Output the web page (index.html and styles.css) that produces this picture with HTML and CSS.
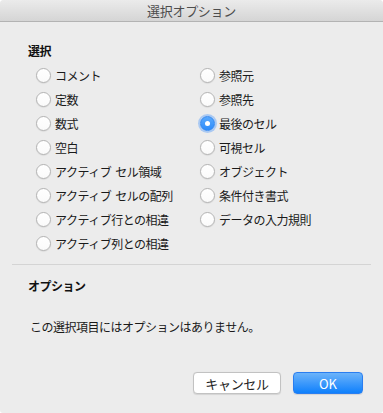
FILE: index.html
```html
<!DOCTYPE html>
<html lang="ja">
  <head>
    <meta charset="UTF-8" />
    <title>選択オプション</title>
    <link rel="stylesheet" href="styles.css">
  </head>
  <body>
    <div class="window">
      <div class="titlebar">選択オプション</div>

      <div class="content content-select">
        <div class="section-title">選択</div>

        <div class="choices">
          <label class="choice"><input type="radio" name="sel" /> コメント</label>
          <label class="choice"><input type="radio" name="sel" /> 参照元</label>
          <label class="choice"><input type="radio" name="sel" /> 定数</label>
          <label class="choice"><input type="radio" name="sel" /> 参照先</label>
          <label class="choice"><input type="radio" name="sel" /> 数式</label>
          <label class="choice"><input type="radio" name="sel" checked /> 最後のセル</label>
          <label class="choice"><input type="radio" name="sel" /> 空白</label>
          <label class="choice"><input type="radio" name="sel" /> 可視セル</label>
          <label class="choice"><input type="radio" name="sel" /> アクティブ セル領域</label>
          <label class="choice"><input type="radio" name="sel" /> オブジェクト</label>
          <label class="choice"><input type="radio" name="sel" /> アクティブ セルの配列</label>
          <label class="choice"><input type="radio" name="sel" /> 条件付き書式</label>
          <label class="choice"><input type="radio" name="sel" /> アクティブ行との相違</label>
          <label class="choice"><input type="radio" name="sel" /> データの入力規則</label>
          <label class="choice"><input type="radio" name="sel" /> アクティブ列との相違</label>
        </div>
      </div>

      <div class="separator"></div>

      <div class="content content-options">
        <div class="section-title">オプション</div>
        <p class="message">この選択項目にはオプションはありません。</p>
      </div>

      <div class="buttons">
        <button class="btn">キャンセル</button>
        <button class="btn btn-default">OK</button>
      </div>
    </div>
  </body>
</html>
```

FILE: styles.css
```css
* {
  margin: 0;
  padding: 0;
  box-sizing: border-box;
}

body {
  background-color: #fff;
  font-family: "Noto Sans CJK JP", "Noto Sans", sans-serif;
  font-size: 12px;
  letter-spacing: -0.5px;
  color: #1a1a1a;
}

.window {
  width: 383px;
  height: 413px;
  background-color: #ececec;
  border-radius: 4px 4px 3px 3px;
  overflow: hidden;
  display: flex;
  flex-direction: column;
}

.titlebar {
  height: 22px;
  line-height: 21px;
  text-align: center;
  font-size: 13px;
  letter-spacing: -0.3px;
  color: #4d4d4d;
  background: linear-gradient(#ebebeb, #d5d5d5);
  border-bottom: 1px solid #b3b3b3;
}

.content {
  padding: 0 28px;
}

.content-select {
  padding-top: 20px;
}

.content-options {
  padding-top: 12px;
}

.section-title {
  font-weight: bold;
  line-height: 18px;
  color: #111;
}

.choices {
  margin-top: 3px;
  padding-left: 8px;
  display: grid;
  grid-template-columns: 164px 1fr;
  grid-auto-rows: 24px;
}

.choice {
  display: flex;
  align-items: center;
  gap: 4px;
  white-space: nowrap;
  word-spacing: 2px;
}

.choice input {
  appearance: none;
  -webkit-appearance: none;
  width: 15px;
  height: 15px;
  border-radius: 50%;
  background: linear-gradient(#fff, #fafafa);
  border: 1px solid #b4b4b4;
  box-shadow: 0 0.5px 1px rgba(0, 0, 0, 0.12);
  flex-shrink: 0;
  position: relative;
}

.choice input:checked {
  background: linear-gradient(#5aa9fd, #2d8cfb);
  border-color: #3187f2;
  box-shadow: 0 0 0 2px rgba(90, 160, 250, 0.45);
}

.choice input:checked::after {
  content: "";
  position: absolute;
  top: 4px;
  left: 4px;
  width: 5px;
  height: 5px;
  border-radius: 50%;
  background-color: #fff;
}

.separator {
  margin: 9px 12px 0;
  height: 1px;
  flex-shrink: 0;
  background-color: #d4d4d4;
}

.message {
  margin-top: 23px;
  padding-left: 2px;
  line-height: 18px;
}

.buttons {
  margin-top: auto;
  padding: 0 20px 19px;
  display: flex;
  justify-content: flex-end;
  gap: 12px;
}

.btn {
  height: 22px;
  width: 88px;
  font-family: inherit;
  font-size: 13px;
  letter-spacing: -0.3px;
  color: #222;
  background-color: #fff;
  border: 1px solid #c2c2c2;
  border-radius: 4px;
  box-shadow: 0 0.5px 1px rgba(0, 0, 0, 0.1);
}

.btn-default {
  width: 70px;
  letter-spacing: 0;
  color: #fff;
  background: linear-gradient(#6cb3fa, #0f80fc);
  border-color: #2a7ef0;
}
```
